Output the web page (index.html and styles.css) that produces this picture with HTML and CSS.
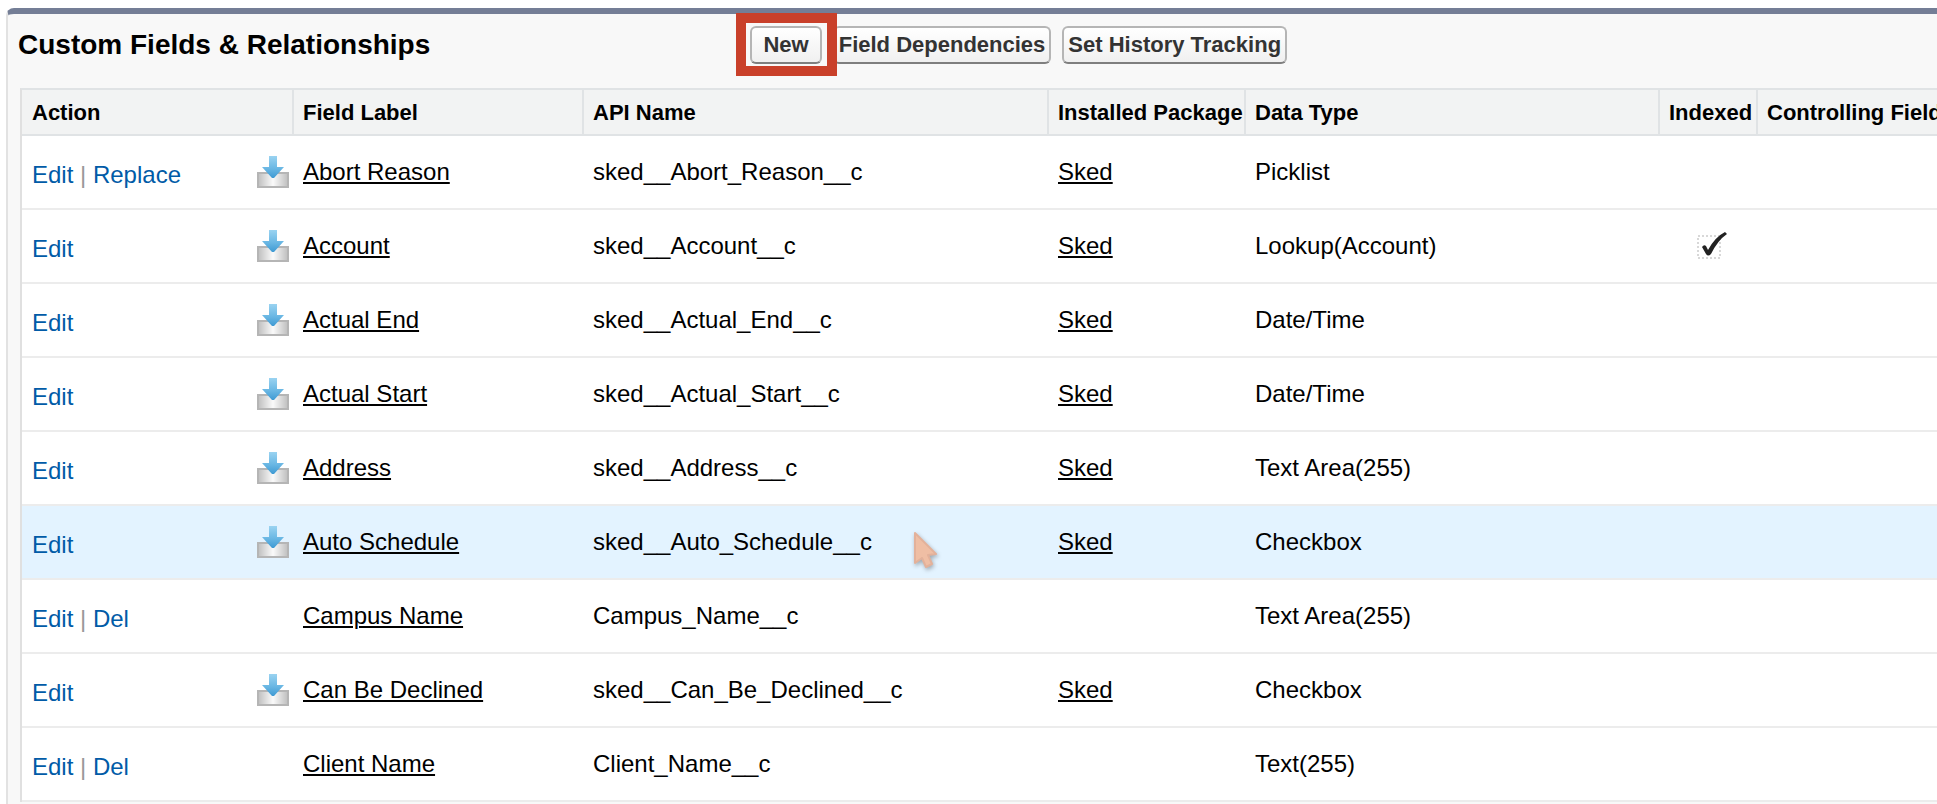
FILE: index.html
```html
<!DOCTYPE html>
<html lang="en">
<head>
<meta charset="utf-8">
<title>Custom Fields &amp; Relationships</title>
<link rel="stylesheet" href="styles.css">
</head>
<body>
<svg class="defs" aria-hidden="true">
  <defs>
    <linearGradient id="tray" x1="0" x2="1" y1="0" y2="0">
      <stop offset="0" stop-color="#c2c2c2"/><stop offset=".5" stop-color="#fafafa"/><stop offset="1" stop-color="#c2c2c2"/>
    </linearGradient>
    <linearGradient id="arrow" x1="0" x2="0" y1="0" y2="1">
      <stop offset="0" stop-color="#9ad3f1"/><stop offset=".55" stop-color="#6bb8e4"/><stop offset="1" stop-color="#3f9ad3"/>
    </linearGradient>
  </defs>
  <symbol id="installed" viewBox="0 0 32 32">
    <rect x="0" y="16" width="32" height="16" fill="#b5b5b5"/>
    <rect x="2" y="18" width="28" height="12" fill="url(#tray)"/>
    <path d="M12 0h8v11h7L17 22h-2L5 11h7z" fill="url(#arrow)"/>
  </symbol>
</svg>
<main class="panel">
  <header class="panel-head">
    <h1 class="title">Custom Fields &amp; Relationships</h1>
    <div class="buttons">
      <span class="highlight"><button class="btn btn-new" type="button">New</button></span>
      <button class="btn" type="button">Field Dependencies</button>
      <button class="btn" type="button">Set History Tracking</button>
    </div>
  </header>
  <table class="fields">
    <colgroup>
      <col class="c-action"><col class="c-label"><col class="c-api"><col class="c-package"><col class="c-type"><col class="c-indexed"><col>
    </colgroup>
    <thead>
      <tr><th scope="col">Action</th><th scope="col">Field Label</th><th scope="col">API Name</th><th scope="col">Installed Package</th><th scope="col">Data Type</th><th scope="col">Indexed</th><th scope="col">Controlling Field</th></tr>
    </thead>
    <tbody>
      <tr>
        <td><div class="actions"><span class="sep-links"><a href="#">Edit</a> | <a href="#">Replace</a></span><svg class="installed" role="img" aria-label="Installed"><use href="#installed"/></svg></div></td>
        <td><a href="#">Abort Reason</a></td><td>sked__Abort_Reason__c</td><td><a href="#">Sked</a></td><td>Picklist</td><td></td><td></td>
      </tr>
      <tr>
        <td><div class="actions"><span class="sep-links"><a href="#">Edit</a></span><svg class="installed" role="img" aria-label="Installed"><use href="#installed"/></svg></div></td>
        <td><a href="#">Account</a></td><td>sked__Account__c</td><td><a href="#">Sked</a></td><td>Lookup(Account)</td>
        <td class="check-cell"><svg class="check" viewBox="0 0 32 28" role="img" aria-label="Indexed">
          <rect x="3" y="4" width="22" height="22" fill="none" stroke="#d8d8d8" stroke-width="2" stroke-dasharray="2 2"/>
          <path d="M7 15q2-3 4-1l2 4Q20 5 30 0l2 2Q23 8 16 22q-3 3-5 0z" fill="#222"/>
        </svg></td><td></td>
      </tr>
      <tr>
        <td><div class="actions"><span class="sep-links"><a href="#">Edit</a></span><svg class="installed" role="img" aria-label="Installed"><use href="#installed"/></svg></div></td>
        <td><a href="#">Actual End</a></td><td>sked__Actual_End__c</td><td><a href="#">Sked</a></td><td>Date/Time</td><td></td><td></td>
      </tr>
      <tr>
        <td><div class="actions"><span class="sep-links"><a href="#">Edit</a></span><svg class="installed" role="img" aria-label="Installed"><use href="#installed"/></svg></div></td>
        <td><a href="#">Actual Start</a></td><td>sked__Actual_Start__c</td><td><a href="#">Sked</a></td><td>Date/Time</td><td></td><td></td>
      </tr>
      <tr>
        <td><div class="actions"><span class="sep-links"><a href="#">Edit</a></span><svg class="installed" role="img" aria-label="Installed"><use href="#installed"/></svg></div></td>
        <td><a href="#">Address</a></td><td>sked__Address__c</td><td><a href="#">Sked</a></td><td>Text Area(255)</td><td></td><td></td>
      </tr>
      <tr class="hovered">
        <td><div class="actions"><span class="sep-links"><a href="#">Edit</a></span><svg class="installed" role="img" aria-label="Installed"><use href="#installed"/></svg></div></td>
        <td><a href="#">Auto Schedule</a></td>
        <td class="pointer-cell">sked__Auto_Schedule__c<svg class="pointer" viewBox="0 0 24 36" aria-hidden="true">
          <path d="M1 1l21 21-8 1 4 9-6 3-4-9-7 5z" fill="#efbea4" stroke="#e3b19a" stroke-width="2" stroke-linejoin="round"/>
        </svg></td>
        <td><a href="#">Sked</a></td><td>Checkbox</td><td></td><td></td>
      </tr>
      <tr>
        <td><div class="actions"><span class="sep-links"><a href="#">Edit</a> | <a href="#">Del</a></span></div></td>
        <td><a href="#">Campus Name</a></td><td>Campus_Name__c</td><td></td><td>Text Area(255)</td><td></td><td></td>
      </tr>
      <tr>
        <td><div class="actions"><span class="sep-links"><a href="#">Edit</a></span><svg class="installed" role="img" aria-label="Installed"><use href="#installed"/></svg></div></td>
        <td><a href="#">Can Be Declined</a></td><td>sked__Can_Be_Declined__c</td><td><a href="#">Sked</a></td><td>Checkbox</td><td></td><td></td>
      </tr>
      <tr>
        <td><div class="actions"><span class="sep-links"><a href="#">Edit</a> | <a href="#">Del</a></span></div></td>
        <td><a href="#">Client Name</a></td><td>Client_Name__c</td><td></td><td>Text(255)</td><td></td><td></td>
      </tr>
    </tbody>
  </table>
</main>
</body>
</html>
```
FILE: styles.css
```css
* { box-sizing: border-box; }

body {
  margin: 0;
  padding: 8px 0 0 6px;
  background: #fff;
  color: #000;
  font: 24px/28px "Liberation Sans", Arial, sans-serif;
  overflow-x: hidden;
}

.defs { position: absolute; width: 0; height: 0; }

.panel {
  min-height: calc(100vh - 8px);
  padding-left: 12px;
  background: #f8f8f8;
  border-left: 2px solid #e2e2e2;
  border-top: 6px solid #747e96;
  border-top-left-radius: 8px;
}

.panel-head {
  display: flex;
  align-items: flex-start;
  height: 74px;
  padding-top: 12px;
}

.title {
  flex: 0 0 calc(38% + 4px);
  margin: 0 0 0 -2px;
  padding-top: 3px;
  font-size: 28px;
  line-height: 32px;
  white-space: nowrap;
}

.buttons {
  display: flex;
  gap: 11px;
}

.highlight { position: relative; }

.highlight::after {
  content: "";
  position: absolute;
  inset: -13px -15px -12px -14px;
  border: 10px solid #c9402a;
  pointer-events: none;
}

.btn {
  display: block;
  height: 38px;
  padding: 0 4px;
  border: 2px solid #b5b5b5;
  border-bottom-color: #7f7f7f;
  border-radius: 6px;
  background: linear-gradient(#fff, #f0f0f0);
  color: #333;
  font: bold 22px/32px "Liberation Sans", Arial, sans-serif;
  white-space: nowrap;
}

.btn-new { padding: 0 11px; }

.fields {
  width: 100%;
  table-layout: fixed;
  border-collapse: separate;
  border-spacing: 0;
  border-top: 2px solid #e0e3e5;
  border-left: 2px solid #e0e0e0;
  background: #fff;
}

.c-action { width: 270px; }
.c-label { width: 290px; }
.c-api { width: 465px; }
.c-package { width: 197px; }
.c-type { width: 414px; }
.c-indexed { width: 98px; }

.fields th,
.fields td {
  text-align: left;
  white-space: nowrap;
  vertical-align: middle;
}

.fields th {
  height: 46px;
  padding: 2px 0 0 9px;
  border-bottom: 2px solid #e0e3e5;
  border-left: 2px solid #e0e3e5;
  background: #f2f3f3;
  font-size: 22px;
}

.fields td {
  height: 74px;
  padding: 0 0 0 11px;
  border-bottom: 2px solid #ececec;
}

.fields th:first-child {
  padding-left: 10px;
  border-left: 0;
}

.fields td:first-child { padding-left: 10px; }

.fields td a {
  color: #000;
  text-decoration-thickness: 2px;
  text-underline-offset: 2px;
}

.fields .actions a { color: #015ba7; text-decoration: none; }

.actions {
  display: flex;
  justify-content: space-between;
  align-items: center;
  padding-right: 3px;
}

.sep-links { padding-top: 5px; color: #999; }

.installed { width: 32px; height: 32px; }

.hovered { background: #e3f3ff; }

.fields .check-cell { padding: 0 0 0 8px; }

.check { display: block; width: 32px; height: 28px; margin: 0 auto; }

.pointer-cell { position: relative; }

.pointer {
  position: absolute;
  left: 332px;
  top: 26px;
  width: 24px;
  height: 36px;
  filter: drop-shadow(1px 2px 2px rgba(0, 0, 0, .3));
}
```
